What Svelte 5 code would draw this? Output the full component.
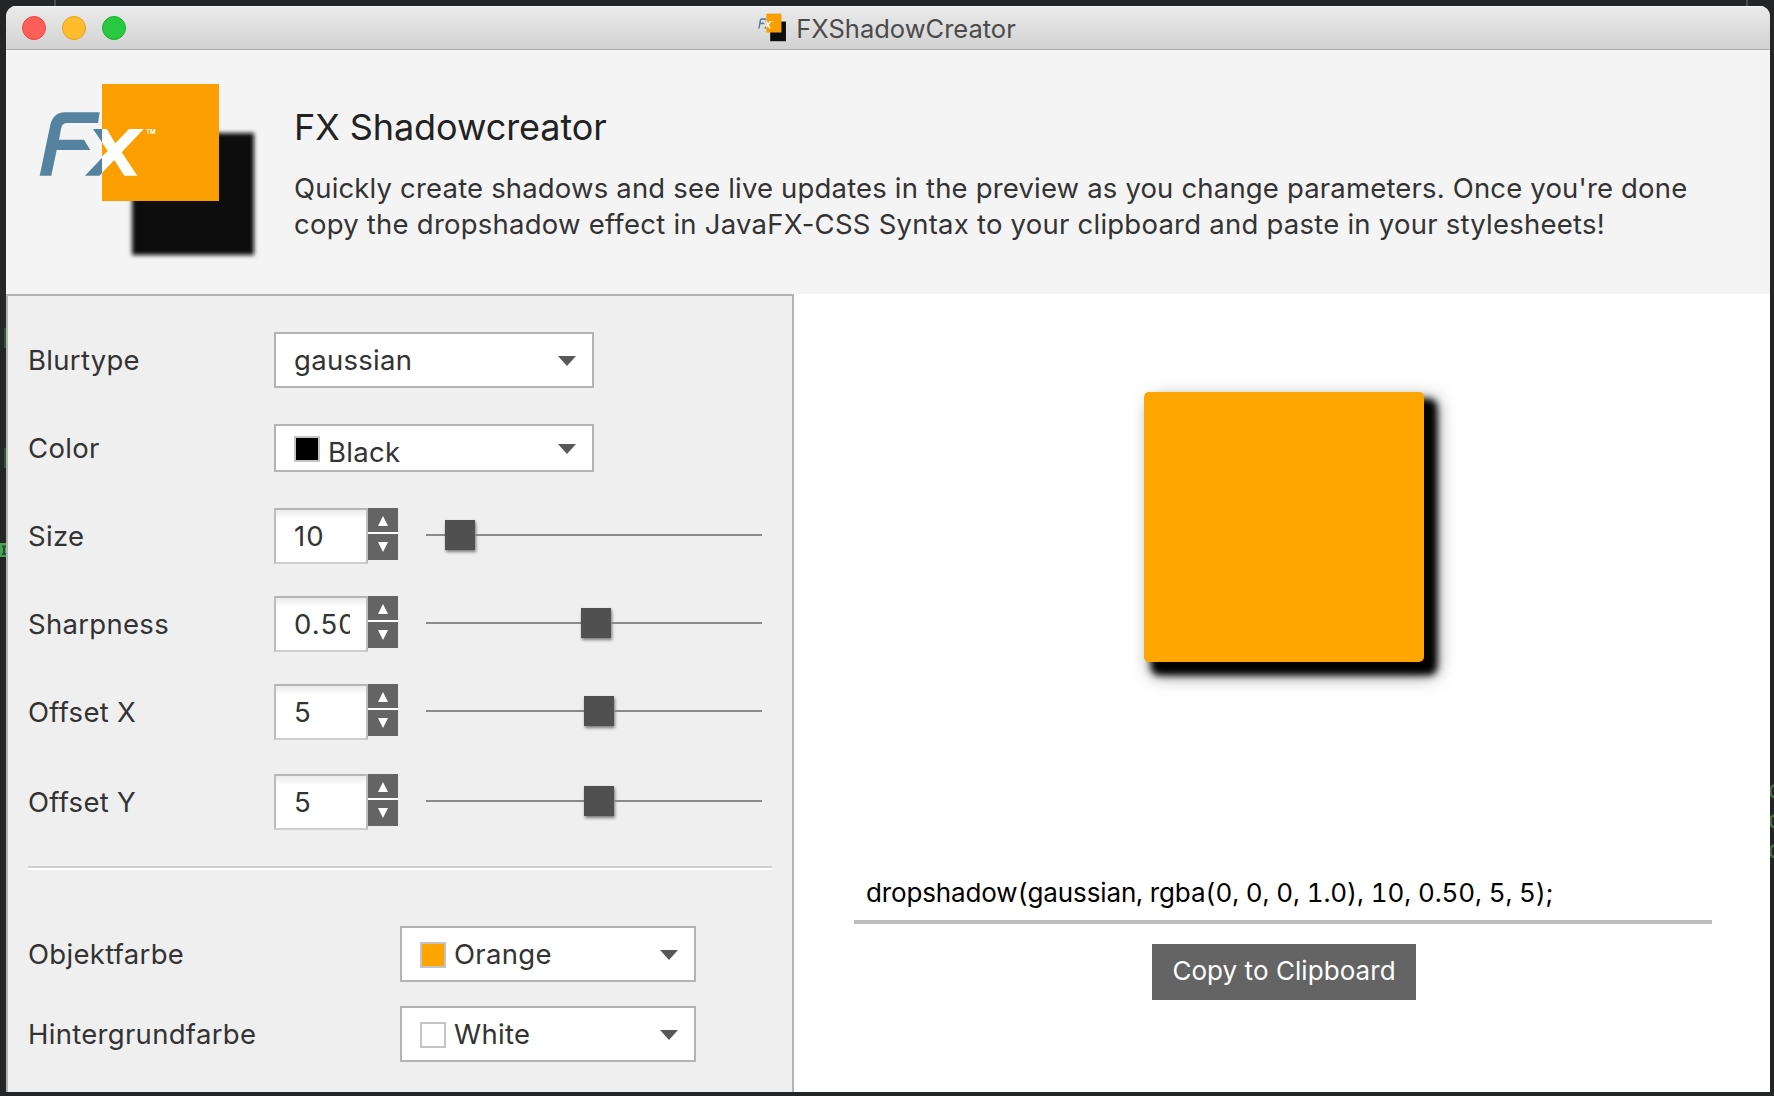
<script>
  const shadow = {
    type: 'gaussian',
    size: '10',
    sharpness: '0.50',
    x: '5',
    y: '5'
  };

  // pos: share of the slider's travel (0–1)
  const params = [
    { label: 'Size', value: shadow.size, pos: 0.0605 },
    { label: 'Sharpness', value: shadow.sharpness, pos: 0.5065 },
    { label: 'Offset X', value: shadow.x, pos: 0.5163 },
    { label: 'Offset Y', value: shadow.y, pos: 0.5163 }
  ];

  const objects = [
    { label: 'Objektfarbe', name: 'Orange', swatch: 'orange' },
    { label: 'Hintergrundfarbe', name: 'White', swatch: 'white' }
  ];

  const css = `dropshadow(${shadow.type}, rgba(0, 0, 0, 1.0), ${shadow.size}, ${shadow.sharpness}, ${shadow.x}, ${shadow.y});`;
</script>

{#snippet arrow()}
  <svg class="arrow" viewBox="0 0 18 10"><path d="M0 0H18L9 10Z" /></svg>
{/snippet}

{#snippet logo(cls)}
  <svg class={cls} viewBox="30 74 236 192" preserveAspectRatio="none">
    <defs>
      <filter id="soft-{cls}" x="-20%" y="-20%" width="140%" height="140%">
        <feGaussianBlur stdDeviation="2.2" />
      </filter>
    </defs>
    <rect x="132" y="133" width="122" height="122" fill="#111" filter="url(#soft-{cls})" />
    <rect x="102" y="84" width="117" height="117" fill="#fb9f00" />
    <path
      fill="#54829f"
      d="M99.7 112.3 98 123H67Q62.2 123 61.3 127.7L59 139.7H84L90.3 150H56.7L51.3 175.7H39.7L50.3 125Q53.3 112.3 65 112.3Z"
    />
    <path fill="#54829f" d="M93 129H102V142.3ZM102 157.7V173L99.3 175.7H85Z" />
    <path
      fill="#fff"
      d="M102 129H106.7L115.3 143.3 129 129H143.7L121.7 152.3 137.3 175.7H124.3L114.3 160 102 173V156.5L107.7 151 102 142.3Z"
    />
    <text class="tm" x="146" y="133.5">TM</text>
  </svg>
{/snippet}

<div class="desktop">
  <svg class="behind" viewBox="0 0 1774 1096">
    <path d="M55 0V6M1747 0V6" stroke="#4b4c4e" stroke-width="2" />
    <path d="M5 328V348M5 448V468" stroke="#2c5434" stroke-width="2" />
    <rect x="-8" y="543" width="16" height="14" rx="3" fill="#48a35a" />
    <path d="M2 546.5H6M4 546.5V554M2 554H6" stroke="#294d31" stroke-width="2" />
    <g fill="none" stroke="#4a6b43" stroke-width="2.5">
      <rect x="1770.5" y="785.5" width="12" height="11.5" rx="4" />
      <rect x="1770.5" y="815.5" width="12" height="11.5" rx="4" />
      <rect x="1770.5" y="845.5" width="12" height="11.5" rx="4" />
    </g>
  </svg>

  <div class="window">
    <header class="titlebar">
      <div class="lights">
        <span class="light close"></span>
        <span class="light minimise"></span>
        <span class="light zoom"></span>
      </div>
      <div class="caption">
        {@render logo('mini')}
        <span>FXShadowCreator</span>
      </div>
    </header>

    <section class="intro">
      {@render logo('logo')}
      <div class="copy">
        <h1>FX Shadowcreator</h1>
        <p>
          Quickly create shadows and see live updates in the preview as you change parameters. Once you're done<br />
          <span class="second">copy the dropshadow effect in JavaFX-CSS Syntax to your clipboard and paste in your stylesheets!</span>
        </p>
      </div>
    </section>

    <main>
      <section class="controls">
        <div class="row">
          <span class="label">Blurtype</span>
          <div class="combo wide"><span>{shadow.type}</span>{@render arrow()}</div>
        </div>
        <div class="row short">
          <span class="label">Color</span>
          <div class="combo wide">
            <i class="swatch black"></i><span class="low">Black</span>{@render arrow()}
          </div>
        </div>

        <div class="params">
          {#each params as p}
            <div class="row param">
              <span class="label">{p.label}</span>
              <div class="spinner">
                <div class="field"><span>{p.value}</span></div>
                <div class="steps">
                  <div class="step up"><svg viewBox="0 0 10 10"><path d="M5 0 10 10H0Z" /></svg></div>
                  <div class="step down"><svg viewBox="0 0 10 10"><path d="M0 0H10L5 10Z" /></svg></div>
                </div>
              </div>
              <div class="slider">
                <div class="lead" style:flex-grow={p.pos}></div>
                <div class="thumb"></div>
                <div class="rest" style:flex-grow={1 - p.pos}></div>
              </div>
            </div>
          {/each}
        </div>

        <div class="separator"></div>

        <div class="objects">
          {#each objects as o}
            <div class="row object">
              <span class="label">{o.label}</span>
              <div class="combo"><i class="swatch {o.swatch}"></i><span>{o.name}</span>{@render arrow()}</div>
            </div>
          {/each}
        </div>
      </section>

      <section class="preview">
        <div class="sample"></div>
        <div class="output">{css}</div>
        <button>Copy to Clipboard</button>
      </section>
    </main>
  </div>
</div>

<style>
  :global(body) {
    overflow: hidden;
  }
  .desktop {
    position: relative;
    box-sizing: border-box;
    width: 1774px;
    height: 1096px;
    padding: 6px 4px 4px 6px;
    background: #242527;
    font: 27.5px/36px Inter, 'Liberation Sans', sans-serif;
    letter-spacing: 0.3px;
    color: #333;
    white-space: nowrap;
  }
  .desktop :global(*) {
    box-sizing: border-box;
  }
  .behind {
    position: absolute;
    inset: 0;
    width: 1774px;
    height: 1096px;
  }
  .window {
    position: relative;
    display: flex;
    flex-direction: column;
    width: 1764px;
    height: 1086px;
    overflow: hidden;
    border-radius: 10px 10px 0 0;
    background: #f4f4f4;
  }

  .titlebar {
    display: grid;
    grid-template-columns: 1fr auto 1fr;
    align-items: center;
    height: 44px;
    flex: none;
    background: linear-gradient(#ebebeb, #d2d2d2);
    border-bottom: 1px solid #b0b0b0;
    box-shadow: inset 0 1px #f7f7f7;
  }
  .lights {
    display: flex;
    gap: 16px;
    padding-left: 16px;
  }
  .light {
    width: 24px;
    height: 24px;
    border-radius: 50%;
    border: 1px solid;
  }
  .close {
    background: #ff5f58;
    border-color: #e2463f;
  }
  .minimise {
    background: #ffbd2e;
    border-color: #dfa023;
  }
  .zoom {
    background: #28c940;
    border-color: #1bac2c;
  }
  .caption {
    display: flex;
    align-items: center;
    font-size: 25.5px;
    letter-spacing: 0;
    color: #4b4b4b;
    padding-right: 3px;
  }
  .caption span {
    padding-top: 2px;
  }
  .mini {
    width: 30.5px;
    height: 31px;
    margin-right: 8.5px;
  }

  .intro {
    display: flex;
    height: 244px;
    flex: none;
    padding: 24px 0 0 24px;
  }
  .logo {
    width: 236px;
    height: 192px;
    flex: none;
  }
  .tm {
    font: 700 6px Inter, sans-serif;
    letter-spacing: -0.1px;
    fill: #fff;
  }
  .copy {
    padding: 32px 0 0 28px;
  }
  h1 {
    margin: 0;
    font-size: 36px;
    line-height: 42px;
    font-weight: 400;
    letter-spacing: -0.07px;
    color: #222;
  }
  p {
    margin: 22px 0 0;
    letter-spacing: 0.17px;
  }
  .second {
    letter-spacing: 0.235px;
  }

  main {
    display: flex;
    flex: 1;
    min-height: 0;
  }
  .controls {
    width: 788px;
    flex: none;
    padding: 36px 20px 0;
    background: #efefef;
    border: 2px solid #b3b3b3;
    border-bottom: 0;
  }
  .row {
    display: flex;
    align-items: center;
    height: 56px;
  }
  .label {
    width: 246px;
    flex: none;
  }
  .short {
    height: 48px;
    margin-top: 36px;
  }
  .combo {
    display: flex;
    align-items: center;
    width: 296px;
    height: 100%;
    padding: 0 16px 0 18px;
    background: #fff;
    border: 2px solid #b3b3b3;
  }
  .wide {
    width: 320px;
  }
  .arrow {
    width: 18px;
    height: 10px;
    margin: 2px 0 0 auto;
    fill: #585858;
  }
  .swatch {
    width: 26px;
    height: 26px;
    margin: 2px 8px 0 0;
    border: 2px solid #c4c4c4;
  }
  .black {
    background: #000;
  }
  .orange {
    background: #ffa500;
  }
  .white {
    background: #fff;
  }
  .low {
    padding-top: 7px;
  }

  .params {
    display: flex;
    flex-direction: column;
    gap: 32px;
    margin-top: 36px;
  }
  .param:last-child {
    margin-top: 2px;
  }
  .spinner {
    display: flex;
    width: 124px;
    height: 56px;
  }
  .field {
    width: 94px;
    padding: 8px 16px 0 18px;
    background: linear-gradient(#ececec, #fff 9px);
    border: 2px solid;
    border-color: #b5b5b5 #bdbdbd #cdcdcd;
    letter-spacing: 1.1px;
  }
  .field span {
    display: block;
    overflow: hidden;
  }
  .steps {
    display: flex;
    flex-direction: column;
    gap: 2px;
    width: 30px;
    height: 52px;
    background: #fff;
  }
  .step {
    display: flex;
    justify-content: center;
    background: #646464;
  }
  .up {
    height: 24px;
    padding-top: 8px;
  }
  .down {
    height: 26px;
    padding-top: 8px;
  }
  .step svg {
    width: 10px;
    height: 10px;
    fill: #fff;
  }
  .slider {
    display: flex;
    align-items: center;
    width: 336px;
    height: 30px;
    margin: -2px 0 0 28px;
  }
  .lead,
  .rest {
    flex-basis: 0;
    height: 2px;
    background: #8a8a8a;
  }
  .thumb {
    width: 30px;
    height: 30px;
    flex: none;
    background: #505050;
    box-shadow: 1px 2px 3px rgba(0, 0, 0, 0.5);
  }

  .separator {
    height: 4px;
    margin-top: 36px;
    background: linear-gradient(#cdcdcd 50%, #fff 50%);
  }
  .objects {
    display: flex;
    flex-direction: column;
    gap: 24px;
    margin-top: 56px;
  }
  .object .label {
    width: 372px;
  }

  .preview {
    display: flex;
    flex: 1;
    flex-direction: column;
    align-items: center;
    padding: 98px 0 0 4px;
    background: #fff;
  }
  .sample {
    width: 280px;
    height: 270px;
    border-radius: 5px;
    background: #ffa500;
    box-shadow:
      10px 10px 7px 3px #000,
      10px 10px 18px 3px rgba(0, 0, 0, 0.5);
  }
  .output {
    width: 858px;
    height: 62px;
    margin: 200px 2px 20px 0;
    padding: 13px 0 0 12px;
    border-bottom: 4px solid #bdbdbd;
    font-size: 26px;
    font-feature-settings: 'tnum';
    letter-spacing: -0.13px;
    color: #000;
  }
  button {
    width: 264px;
    height: 56px;
    padding: 0 0 2px;
    border: 0;
    background: #646464;
    color: #fff;
    font: inherit;
    font-size: 26px;
    letter-spacing: 0.06px;
  }
</style>
